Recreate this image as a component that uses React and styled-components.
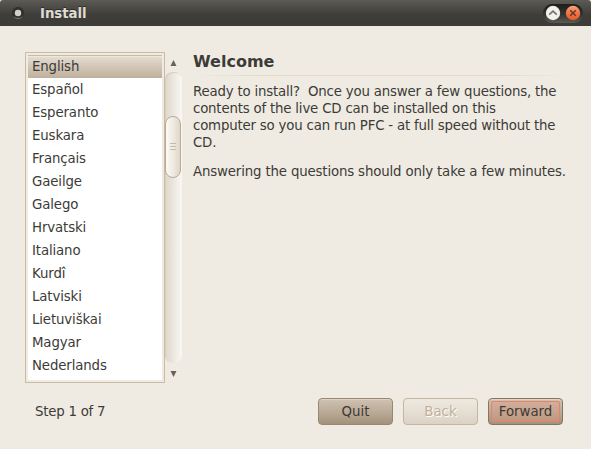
import React from "react";
import styled, { createGlobalStyle, css } from "styled-components";

const Global = createGlobalStyle`
  * { box-sizing: border-box; }
  html, body { margin: 0; padding: 0; overflow: hidden; background: #efebe3; }
`;

const Window = styled.div`
  width: 591px;
  height: 449px;
  display: flex;
  flex-direction: column;
  background: #efebe3;
  color: #3c3b37;
  font: 13.33px/17px "DejaVu Sans", sans-serif;
  overflow: hidden;
`;

const TitleBar = styled.header`
  flex: none;
  height: 26px;
  display: flex;
  align-items: center;
  padding: 0 8px 0 10px;
  border-radius: 3px 3px 0 0;
  background: linear-gradient(#5c5b55 0, #53524d 4px, #3e3d39 15px, #3c3b37 100%);
`;

const Title = styled.h1`
  flex: 1;
  margin: 1px 0 0 14px;
  font-size: 13.33px;
  line-height: 26px;
  letter-spacing: -0.05px;
  color: #dfdbd2;
  text-shadow: 0 -1px 0 #2b2a27;
`;

const WindowControls = styled.div`
  width: 40px;
  height: 19px;
  display: flex;
  align-items: center;
  justify-content: space-between;
  padding: 0 2px;
  border-radius: 9px;
  background: linear-gradient(#1d1d1b, #343330 55%, #5b5a55);
`;

const Content = styled.main`
  flex: none;
  height: 357px;
  display: flex;
  padding: 26px 0 0 25px;
`;

const LanguageList = styled.ul`
  width: 140px;
  height: 331px;
  margin: 0;
  padding: 2px;
  list-style: none;
  letter-spacing: -0.13px;
  border: 1px solid #cabca4;
  background: linear-gradient(#fff, #fff) 2px 2px / 134px 325px no-repeat;
`;

const Language = styled.li`
  height: 23px;
  padding-left: 4px;
  line-height: 23px;
  ${(p) =>
    p.$selected &&
    css`
      border-top: 1px solid #c9baa4;
      line-height: 21px;
      box-shadow: inset 0 1px 0 #eee8df;
      background: linear-gradient(#e6ded3, #d5cabc 40%, #bfb09c);
    `}
`;

const ScrollBar = styled.div`
  width: 17px;
  height: 331px;
  display: flex;
  flex-direction: column;
`;

const ScrollArrow = styled.div`
  flex: none;
  height: 20px;
  display: flex;
  justify-content: center;
  padding-top: 8px;
  svg { display: block; }
`;

const Trough = styled.div`
  flex: none;
  height: 291px;
  padding-top: 44px;
  border-radius: 8px;
  background: linear-gradient(90deg, #ddd6ca, #eae5dc 45%, #faf8f5);
  box-shadow: inset 1px 1px 0 #d8cfc0;
`;

const Thumb = styled.div`
  width: 16px;
  height: 62px;
  display: flex;
  flex-direction: column;
  align-items: center;
  justify-content: center;
  gap: 2px;
  padding-bottom: 2px;
  border: 1px solid #b8aa91;
  border-radius: 8px;
  background: linear-gradient(90deg, #fbfaf7, #eee8df 55%, #dfd6c8);
`;

const Grip = styled.span`
  width: 6px;
  height: 1px;
  background: #c8bba6;
`;

const Article = styled.section`
  width: 380px;
  margin-left: 11px;
`;

const Heading = styled.h2`
  width: 374px;
  height: 24px;
  margin: 0 0 7px;
  font-size: 16px;
  line-height: 19px;
  border-bottom: 1px solid;
  border-image: linear-gradient(90deg, transparent, #dfd8c9 20%, #dfd8c9 80%, transparent) 1;
`;

const Paragraph = styled.p`
  margin: 0 0 12px;
  white-space: pre;
  letter-spacing: ${(p) => (p.$tight ? "-0.19px" : "-0.155px")};
`;

const Footer = styled.footer`
  display: flex;
  align-items: center;
  padding: 15px 28px 0 35px;
`;

const Step = styled.span`
  flex: 1;
  letter-spacing: -0.23px;
`;

const tones = {
  normal: css`
    border: 1px solid #978871;
    background: linear-gradient(#cfc2b2, #bbab98 50%, #a4917b);
    box-shadow: inset 0 1px 0 #ddd3c6;
  `,
  disabled: css`
    border: 1px solid #c3b5a0;
    color: #bfb19b;
    text-shadow: 1px 1px 0 #fffdf8;
    background: linear-gradient(#eee8df, #e6dfd4 50%, #dbd2c5);
  `,
  primary: css`
    border: 1px solid #837761;
    background: linear-gradient(#cfc2b2, #bbab98 50%, #a4917b);
    box-shadow: inset 0 1px 0 #ddd3c6;
  `,
};

const Button = styled.button`
  width: 75px;
  height: 27px;
  margin-left: 10px;
  padding: 2px;
  font: inherit;
  color: #3c3b37;
  border-radius: 4px;
  ${(p) => tones[p.$tone]}
`;

const FocusRing = styled.span`
  display: block;
  height: 21px;
  line-height: 19px;
  border: 1px solid #e5826a;
  border-radius: 2px;
  background: linear-gradient(#d2ae9b, #bf9881);
`;

const languages = [
  "English", "Español", "Esperanto", "Euskara", "Français", "Gaeilge", "Galego",
  "Hrvatski", "Italiano", "Kurdî", "Latviski", "Lietuviškai", "Magyar", "Nederlands",
];

const MenuDot = () => (
  <svg width="16" height="16" viewBox="0 0 16 16">
    <defs>
      <linearGradient id="dot" x2="0" y2="1">
        <stop stopColor="#2c2b28" />
        <stop offset=".75" stopColor="#32312e" />
        <stop offset="1" stopColor="#8a8983" />
      </linearGradient>
    </defs>
    <circle cx="8" cy="8" r="6" fill="url(#dot)" />
    <circle cx="8" cy="7.5" r="5.4" fill="#32312e" />
    <circle cx="8" cy="8" r="3.2" fill="#d5d1c8" />
  </svg>
);

const MaximizeIcon = () => (
  <svg width="16" height="16" viewBox="0 0 16 16">
    <circle cx="8" cy="8" r="7.2" fill="#e9e6df" />
    <circle cx="8" cy="8" r="6.5" fill="#f3f1ec" />
    <path d="M4.2 9.6 8 6.2l3.8 3.4" fill="none" stroke="#77746d" strokeWidth="1.7" />
  </svg>
);

const CloseIcon = () => (
  <svg width="16" height="16" viewBox="0 0 16 16">
    <defs>
      <linearGradient id="close" x2="0" y2="1">
        <stop stopColor="#f9a27c" />
        <stop offset=".5" stopColor="#f17445" />
        <stop offset="1" stopColor="#e75a28" />
      </linearGradient>
    </defs>
    <circle cx="8" cy="8" r="7.2" fill="url(#close)" />
    <path d="m5.2 5.2 5.6 5.6m0-5.6-5.6 5.6" stroke="#663829" strokeWidth="1.5" />
  </svg>
);

export default function App() {
  return (
    <Window>
      <Global />
      <TitleBar>
        <MenuDot />
        <Title>Install</Title>
        <WindowControls>
          <MaximizeIcon />
          <CloseIcon />
        </WindowControls>
      </TitleBar>
      <Content>
        <LanguageList>
          {languages.map((name, i) => (
            <Language key={name} $selected={i === 0}>{name}</Language>
          ))}
        </LanguageList>
        <ScrollBar>
          <ScrollArrow>
            <svg width="7" height="6"><path d="M.5 6 3.5 0l3 6z" fill="#66635c" /></svg>
          </ScrollArrow>
          <Trough>
            <Thumb><Grip /><Grip /><Grip /></Thumb>
          </Trough>
          <ScrollArrow>
            <svg width="7" height="6"><path d="M.5 0 3.5 6l3-6z" fill="#66635c" /></svg>
          </ScrollArrow>
        </ScrollBar>
        <Article>
          <Heading>Welcome</Heading>
          <Paragraph $tight>
            {"Ready to install?  Once you answer a few questions, the\ncontents of the live CD can be installed on this\ncomputer so you can run PFC - at full speed without the\nCD."}
          </Paragraph>
          <Paragraph>Answering the questions should only take a few minutes.</Paragraph>
        </Article>
      </Content>
      <Footer>
        <Step>Step 1 of 7</Step>
        <Button $tone="normal">Quit</Button>
        <Button $tone="disabled" disabled>Back</Button>
        <Button $tone="primary"><FocusRing>Forward</FocusRing></Button>
      </Footer>
    </Window>
  );
}
